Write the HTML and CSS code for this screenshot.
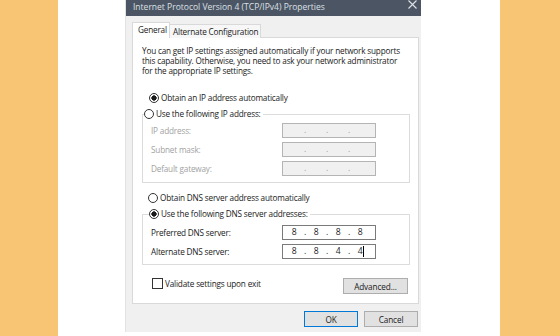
FILE: index.html
```html
<!DOCTYPE html>
<html lang="en">
<head>
  <meta charset="UTF-8">
  <meta name="viewport" content="width=device-width, initial-scale=1.0">
  <title>IPv4 Properties</title>
  <link rel="stylesheet" href="styles.css">
</head>
<body>
  <div class="stage">
    <div class="side"></div>
    <div class="gutter"></div>

    <div class="dialog">
      <div class="titlebar">
        <span class="title">Internet Protocol Version 4 (TCP/IPv4) Properties</span>
        <svg class="close" width="9" height="9" viewBox="0 0 9 9">
          <path d="M0.5 0.5 L8.5 8.5 M8.5 0.5 L0.5 8.5" stroke="#dfe2e6" stroke-width="1.1" fill="none"/>
        </svg>
      </div>

      <div class="dialog-body">
        <div class="tabs">
          <div class="tab active">General</div>
          <div class="tab">Alternate Configuration</div>
        </div>

        <div class="panel">
          <p class="intro">You can get IP settings assigned automatically if your network supports this capability. Otherwise, you need to ask your network administrator for the appropriate IP settings.</p>

          <div class="option first"><span class="radio checked"></span>Obtain an IP address automatically</div>

          <fieldset class="group">
            <legend class="option legend-ip"><span class="radio"></span>Use the following IP address:</legend>
            <div class="fields fields-ip">
              <div class="field disabled">
                <span class="label">IP address:</span>
                <span class="ip"><span class="oct"></span><span class="dot">.</span><span class="oct"></span><span class="dot">.</span><span class="oct"></span><span class="dot">.</span><span class="oct"></span></span>
              </div>
              <div class="field disabled">
                <span class="label">Subnet mask:</span>
                <span class="ip"><span class="oct"></span><span class="dot">.</span><span class="oct"></span><span class="dot">.</span><span class="oct"></span><span class="dot">.</span><span class="oct"></span></span>
              </div>
              <div class="field disabled">
                <span class="label">Default gateway:</span>
                <span class="ip"><span class="oct"></span><span class="dot">.</span><span class="oct"></span><span class="dot">.</span><span class="oct"></span><span class="dot">.</span><span class="oct"></span></span>
              </div>
            </div>
          </fieldset>

          <div class="option dns-auto"><span class="radio"></span>Obtain DNS server address automatically</div>

          <fieldset class="group group-dns">
            <legend class="option legend-dns"><span class="radio checked"></span>Use the following DNS server addresses:</legend>
            <div class="fields fields-dns">
              <div class="field">
                <span class="label">Preferred DNS server:</span>
                <span class="ip"><span class="oct">8</span><span class="dot">.</span><span class="oct">8</span><span class="dot">.</span><span class="oct">8</span><span class="dot">.</span><span class="oct">8</span></span>
              </div>
              <div class="field">
                <span class="label">Alternate DNS server:</span>
                <span class="ip"><span class="oct">8</span><span class="dot">.</span><span class="oct">8</span><span class="dot">.</span><span class="oct">4</span><span class="dot">.</span><span class="oct">4<span class="caret"></span></span></span>
              </div>
            </div>
          </fieldset>

          <div class="panel-footer">
            <div class="check-row"><span class="checkbox"></span>Validate settings upon exit</div>
            <button class="btn advanced">Advanced...</button>
          </div>
        </div>

        <div class="actions">
          <button class="btn default">OK</button>
          <button class="btn">Cancel</button>
        </div>
      </div>
    </div>

    <div class="fill"></div>
    <div class="side right"></div>
  </div>
</body>
</html>
```

FILE: styles.css
```css
body {
  margin: 0;
  background: #ffffff;
  font-family: "Open Sans", "Noto Sans", Arial, sans-serif;
  font-size: 8.2px;
  letter-spacing: -0.18px;
  color: #1a1a1a;
}

.stage {
  display: flex;
  height: 336px;
}

.side {
  width: 58px;
  background: #f7c574;
}

.side.right {
  width: 60px;
}

.gutter {
  width: 68px;
}

.fill {
  flex: 1;
}

/* dialog window */
.dialog {
  width: 295px;
  height: 332px;
  background: #f0f0f0;
  display: flex;
  flex-direction: column;
  box-shadow: -1px 0 0 #e2e2e2;
}

.titlebar {
  height: 16px;
  background: #4b5564;
  display: flex;
  justify-content: space-between;
  align-items: flex-start;
  padding: 0 4px 0 7px;
}

.title {
  color: #dde0e4;
  font-size: 8.5px;
  letter-spacing: 0;
  line-height: 13px;
}

.dialog-body {
  padding: 6px 2px 0 6px;
}

/* tabs */
.tabs {
  display: flex;
  align-items: flex-end;
  position: relative;
  z-index: 1;
  margin-bottom: -1px;
}

.tab {
  height: 13px;
  line-height: 13px;
  padding: 0 2px 0 3px;
  background: #f7f7f7;
  border: 1px solid #d9d9d9;
  border-bottom: none;
  border-left: none;
}

.tab.active {
  height: 16px;
  line-height: 14px;
  width: 38px;
  padding: 0 0 0 5px;
  background: #ffffff;
  border-left: 1px solid #d9d9d9;
  box-sizing: border-box;
}

.panel {
  background: #ffffff;
  border: 1px solid #d9d9d9;
  width: 285px;
  padding: 0 0 9px 0;
}

.intro {
  margin: 8px 0 0 9px;
  width: 266px;
  line-height: 10px;
}

/* radios and checkboxes */
.option {
  display: flex;
  align-items: center;
  height: 12px;
  line-height: 12px;
}

.option.first {
  margin: 16px 0 0 16px;
}

.option.dns-auto {
  margin: 9px 0 0 15px;
}

.radio {
  width: 8px;
  height: 8px;
  border: 1px solid #333333;
  border-radius: 50%;
  background: #ffffff;
  margin-right: 2px;
  flex: none;
}

.radio.checked {
  background: radial-gradient(circle, #1a1a1a 0 2.4px, #ffffff 2.9px);
}

.checkbox {
  width: 9px;
  height: 9px;
  border: 1px solid #333333;
  background: #ffffff;
  margin-right: 2px;
}

/* group boxes */
.group {
  margin: 4px 0 0 9px;
  padding: 0;
  width: 266px;
  border: 1px solid #dcdcdc;
  min-width: 0;
}

.legend-ip {
  margin-left: 1px;
  padding: 0 2px 0 0;
}

.legend-dns {
  margin-left: 6px;
  padding: 0 2px 0 0;
}

.fields {
  display: flex;
  flex-direction: column;
  gap: 4px;
  padding: 3px 0 6px 8px;
}

.fields-dns {
  padding: 5px 0 5px 8px;
}

.field {
  display: flex;
  align-items: center;
  height: 15px;
}

.label {
  width: 131px;
}

.field.disabled .label {
  color: #a2a2a2;
}

.ip {
  width: 94px;
  height: 15px;
  box-sizing: border-box;
  border: 1px solid #7a7a7a;
  background: #ffffff;
  display: flex;
  align-items: center;
  padding-left: 2px;
  line-height: 13px;
  font-size: 8.6px;
}

.field.disabled .ip {
  background: #f0f0f0;
  border-color: #b4b4b4;
  color: #9aa39a;
}

.oct {
  width: 18px;
  text-align: center;
  position: relative;
}

.dot {
  width: 4px;
  text-align: center;
}

.caret {
  position: absolute;
  top: 1px;
  right: 5px;
  width: 1px;
  height: 11px;
  background: #000000;
}

/* footer of the tab */
.panel-footer {
  display: flex;
  justify-content: space-between;
  align-items: flex-start;
  margin: 12px 10px 0 19px;
}

.check-row {
  display: flex;
  align-items: center;
  height: 12px;
}

.btn {
  font-family: inherit;
  font-size: 8.2px;
  letter-spacing: -0.1px;
  color: #1a1a1a;
  background: #e1e1e1;
  border: 1px solid #adadad;
  padding: 0;
  height: 16px;
  line-height: 13px;
  box-sizing: border-box;
}

.btn.advanced {
  width: 65px;
  margin-top: 1px;
}

.actions {
  display: flex;
  justify-content: flex-end;
  gap: 6px;
  margin-top: 7px;
  padding-right: 1px;
}

.actions .btn {
  width: 54px;
}

.btn.default {
  border-color: #0078d7;
}
```
